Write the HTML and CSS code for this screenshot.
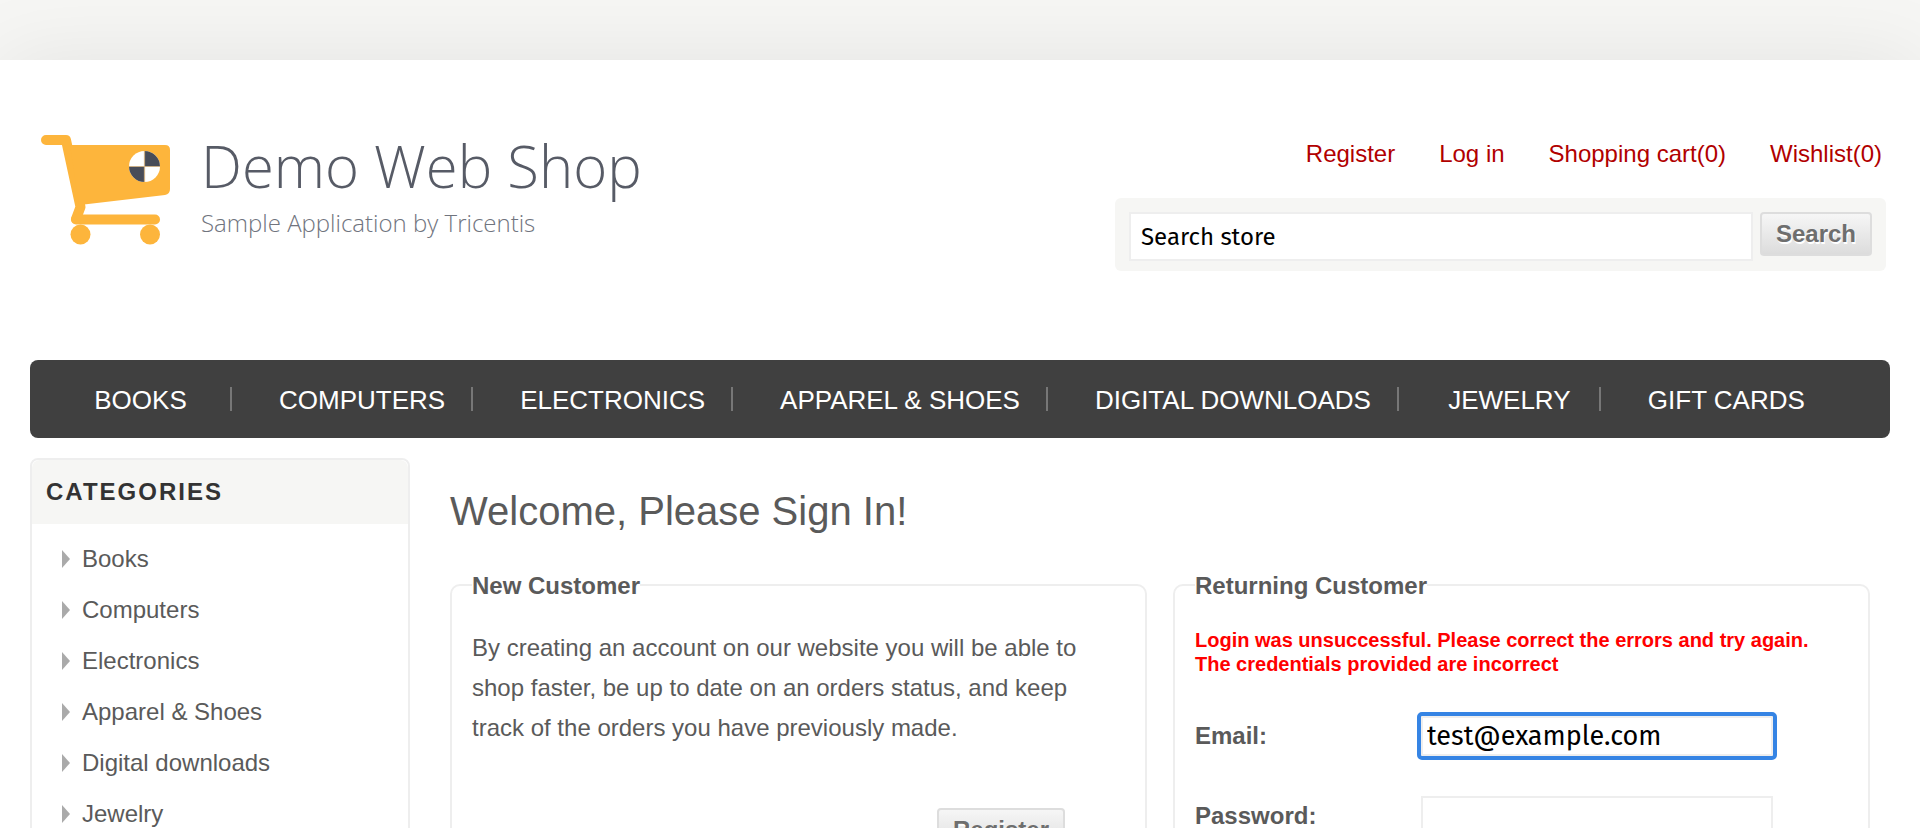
FILE: index.html
```html
<!DOCTYPE html>
<html lang="en">
<head>
<meta charset="utf-8">
<meta name="viewport" content="width=device-width, initial-scale=1">
<title>Demo Web Shop. Login</title>
<link rel="stylesheet" href="styles.css">
</head>
<body>
<div class="page">
  <header class="header">
    <a class="logo" href="#">
      <svg class="logo-cart" viewBox="0 0 130 112" width="130" height="112" aria-hidden="true">
        <g fill="none" stroke="#fdb53c" stroke-width="10" stroke-linecap="round" stroke-linejoin="round">
          <path d="M5 6H25L39.500 73L35 85"/>
          <path d="M35 85.500H114"/>
        </g>
        <path fill="#fdb53c" d="M29 11H124Q129 11 129 16V55Q129 60 124 61L43 70.500H38Z"/>
        <circle cx="39.500" cy="100.500" r="10" fill="#fdb53c"/>
        <circle cx="109" cy="100.500" r="10" fill="#fdb53c"/>
        <circle cx="103.500" cy="32.500" r="15.500" fill="#fff"/>
        <path fill="#484c58" d="M103.500 32.500V17A15.500 15.500 0 0 1 119 32.500ZM103.500 32.500V48A15.500 15.500 0 0 1 88 32.500Z"/>
        <path stroke="#c9ae88" stroke-width="1.200" d="M103.500 17V48M88 32.500H119"/>
      </svg>
      <span class="logo-text">
        <span class="logo-name">Demo Web Shop</span>
        <span class="logo-tagline">Sample Application by Tricentis</span>
      </span>
    </a>
    <div class="header-tools">
      <nav class="account-links" aria-label="Account">
        <a href="#">Register</a>
        <a href="#">Log in</a>
        <a href="#">Shopping cart(0)</a>
        <a href="#">Wishlist(0)</a>
      </nav>
      <form class="search" onsubmit="return false">
        <input class="search-input" type="text" aria-label="Search store" value="Search store">
        <button class="button" type="submit">Search</button>
      </form>
    </div>
  </header>

  <nav class="menu" aria-label="Main">
    <a href="#">BOOKS</a>
    <a href="#">COMPUTERS</a>
    <a href="#">ELECTRONICS</a>
    <a href="#">APPAREL &amp; SHOES</a>
    <a href="#">DIGITAL DOWNLOADS</a>
    <a href="#">JEWELRY</a>
    <a href="#">GIFT CARDS</a>
  </nav>

  <div class="columns">
    <aside class="categories">
      <h2 class="categories-title">CATEGORIES</h2>
      <ul class="categories-list">
        <li><a href="#">Books</a></li>
        <li><a href="#">Computers</a></li>
        <li><a href="#">Electronics</a></li>
        <li><a href="#">Apparel &amp; Shoes</a></li>
        <li><a href="#">Digital downloads</a></li>
        <li><a href="#">Jewelry</a></li>
      </ul>
    </aside>

    <main class="content">
      <h1 class="page-title">Welcome, Please Sign In!</h1>
      <div class="panels">
        <section class="panel">
          <h2 class="panel-title">New Customer</h2>
          <p class="panel-copy">By creating an account on our website you will be able to shop faster, be up to date on an orders status, and keep track of the orders you have previously made.</p>
          <div class="panel-actions"><button class="button" type="button">Register</button></div>
        </section>
        <form class="panel" onsubmit="return false">
          <h2 class="panel-title">Returning Customer</h2>
          <div class="error" role="alert">Login was unsuccessful. Please correct the errors and try again.<br>The credentials provided are incorrect</div>
          <div class="field">
            <label for="email">Email:</label>
            <input class="field-input field-input-active" id="email" type="text" value="test@example.com">
          </div>
          <div class="field">
            <label for="password">Password:</label>
            <input class="field-input" id="password" type="password">
          </div>
        </form>
      </div>
    </main>
  </div>
</div>
</body>
</html>
```

FILE: styles.css
```css
* {
  box-sizing: border-box;
}

html {
  overflow: hidden;
}

body {
  margin: 0;
  height: 100vh;
  overflow: hidden;
  background: #f6f6f4;
  color: #5a5a5a;
  font-family: "Liberation Sans", Arial, sans-serif;
  font-size: 24px;
  line-height: 28px;
}

a {
  color: inherit;
  text-decoration: none;
}

h1,
h2,
p,
ul {
  margin: 0;
  padding: 0;
}

.page {
  min-height: 100vh;
  margin-top: 60px;
  padding: 0 30px 30px;
  background: #fff;
  box-shadow: 0 0 80px rgba(0, 0, 0, 0.08);
}

.header {
  display: flex;
  justify-content: space-between;
  padding: 74px 4px 89px 11px;
}

.logo {
  display: flex;
  gap: 30px;
}

.logo-text {
  display: flex;
  flex-direction: column;
  color: #575b66;
  font-family: "Open Sans", sans-serif;
  font-weight: 300;
}

.logo-name {
  font-size: 58px;
  line-height: 64px;
}

.logo-tagline {
  color: #70747e;
  font-size: 24px;
  line-height: 50px;
}

.header-tools {
  flex: 0 1 771px;
}

.account-links {
  display: flex;
  justify-content: flex-end;
  gap: 44px;
  padding: 6px 4px 30px;
  color: #b10000;
}

.search {
  display: flex;
  align-items: flex-start;
  gap: 7px;
  padding: 14px 14px 10px;
  border-radius: 6px;
  background: #f6f6f4;
}

.search-input {
  flex: 1;
  min-width: 0;
  height: 49px;
  padding: 0 10px;
  border: 2px solid #eee;
  background: #fff;
  color: #000;
  font-family: "Fira Sans", "Noto Sans", sans-serif;
  font-size: 24px;
}

.button {
  height: 44px;
  padding: 0 14px;
  border: 2px solid #ddd;
  border-radius: 4px;
  background: linear-gradient(#f6f6f6, #dcdcdc);
  color: #6e6e6e;
  font-family: inherit;
  font-size: 24px;
  font-weight: bold;
  line-height: 40px;
  text-shadow: 1px 2px 0 #fff;
}

.menu {
  display: flex;
  padding: 27px 0;
  border-radius: 8px;
  background: #404040;
  color: #fff;
  font-size: 26px;
  line-height: 26px;
}

.menu a {
  min-width: 202px;
  height: 24px;
  padding: 0 26px 0 47px;
  border-right: 2px solid #777;
  text-align: center;
}

.menu a:last-child {
  border-right: 0;
}

.columns {
  display: flex;
  gap: 40px;
  padding-top: 20px;
}

.categories {
  flex: 0 0 380px;
  border: 2px solid #eee;
  border-radius: 8px;
}

.categories-title {
  padding: 18px 14px;
  border-radius: 8px 8px 0 0;
  background: #f6f6f4;
  color: #333;
  font-size: 24px;
  letter-spacing: 2px;
}

.categories-list {
  padding: 9px 30px;
  list-style: none;
}

.categories-list li {
  display: flex;
  align-items: center;
  gap: 12px;
  line-height: 51px;
}

.categories-list li::before {
  content: "";
  border-top: 9px solid transparent;
  border-bottom: 9px solid transparent;
  border-left: 8px solid #aaa;
}

.content {
  flex: 1;
  padding: 30px 20px 0 0;
}

.page-title {
  font-size: 40px;
  font-weight: normal;
  line-height: 46px;
}

.panels {
  display: grid;
  grid-template-columns: 1fr 1fr;
  gap: 26px;
  padding-top: 50px;
}

.panel {
  min-height: 380px;
  padding: 0 20px 20px;
  border: 2px solid #eee;
  border-radius: 10px;
}

.panel-title {
  width: fit-content;
  margin-top: -14px;
  background: #fff;
  font-size: 24px;
}

.panel-copy {
  padding: 28px 20px 60px 0;
  line-height: 40px;
}

.panel-actions {
  display: flex;
  justify-content: flex-end;
  padding-right: 60px;
}

.error {
  padding: 28px 0 40px;
  color: #f00;
  font-size: 20px;
  font-weight: bold;
  line-height: 24px;
}

.field {
  display: grid;
  grid-template-columns: 226px 352px;
  align-items: center;
  margin-bottom: 40px;
  font-weight: bold;
}

.field-input {
  width: 100%;
  height: 40px;
  padding: 0 4px;
  border: 2px solid #eee;
  background: #fff;
  color: #000;
  font-family: "Fira Sans", "Noto Sans", sans-serif;
  font-size: 27px;
}

.field-input-active {
  outline: 4px solid #3584e4;
  border-radius: 1px;
}
```
